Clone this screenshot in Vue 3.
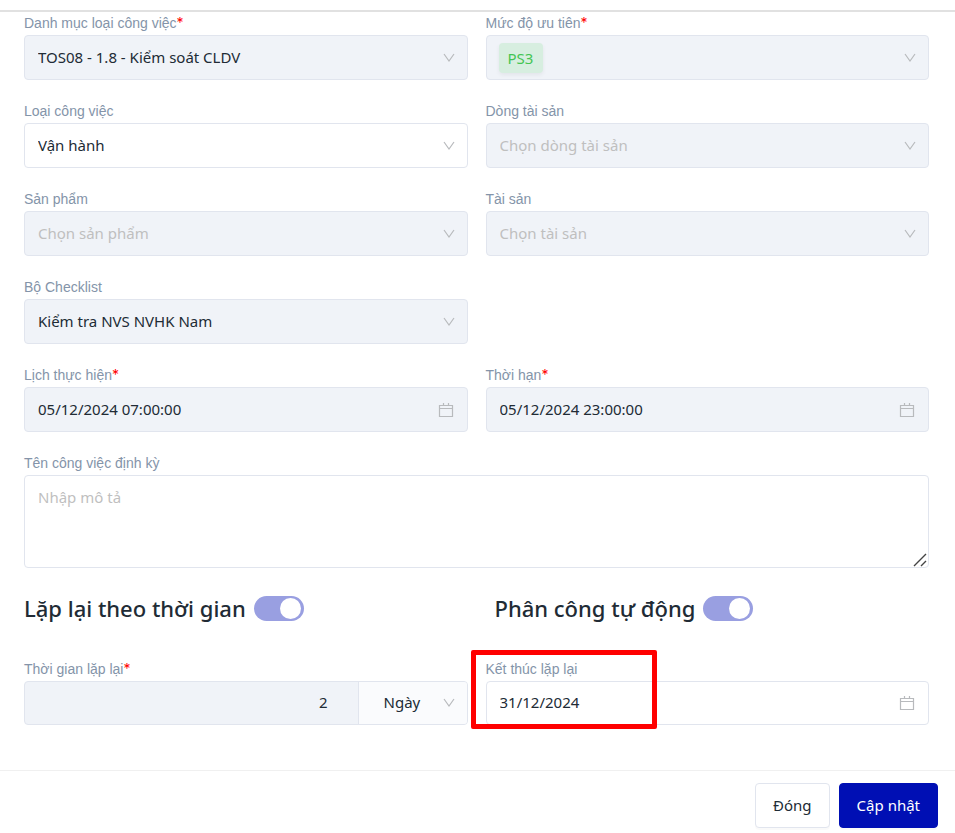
<template>
  <div class="dialog">
    <header class="dialog-head"></header>

    <form class="dialog-body" @submit.prevent>
      <div class="grid">
        <div v-for="f in fields" :key="f.id" class="field" :class="{ first: f.newRow }">
          <label :for="f.id">{{ f.label }}<span v-if="f.required" class="req">*</span></label>

          <div v-if="f.type === 'date'" class="control" :class="{ disabled: f.disabled }">
            <input :id="f.id" type="text" v-model="f.value" :disabled="f.disabled" />
            <svg class="calendar" viewBox="0 0 16 16" aria-hidden="true">
              <path d="M1.500 3.500h13v11h-13zM1.500 6.500h13M5.500 1v3M10.500 1v3" />
            </svg>
          </div>

          <div v-else class="control" :class="{ disabled: f.disabled, tagged: f.tag }">
            <select :id="f.id" v-model="f.value" :disabled="f.disabled" :class="{ tag: f.tag, placeholder: !f.value }">
              <option v-if="f.placeholder" value="">{{ f.placeholder }}</option>
              <option v-else :value="f.value">{{ f.value }}</option>
            </select>
            <svg class="chevron" viewBox="0 0 12 12" aria-hidden="true">
              <path d="M1 2l5 7 5-7" />
            </svg>
          </div>
        </div>

        <div class="field wide">
          <label for="name">Tên công việc định kỳ</label>
          <textarea id="name" v-model="name" placeholder="Nhập mô tả"></textarea>
          <svg class="grip" viewBox="0 0 14 14" aria-hidden="true">
            <path d="M1 13L13 1M8 13l5-5" />
          </svg>
        </div>
      </div>

      <div class="grid switches">
        <div class="switch-row">
          <label for="repeat">Lặp lại theo thời gian</label>
          <input id="repeat" v-model="repeat" class="switch" type="checkbox" role="switch" disabled />
        </div>
        <div class="switch-row second">
          <label for="assign">Phân công tự động</label>
          <input id="assign" v-model="assign" class="switch" type="checkbox" role="switch" disabled />
        </div>
      </div>

      <div class="grid repeat">
        <div class="field">
          <label for="every">Thời gian lặp lại<span class="req">*</span></label>
          <div class="control disabled">
            <input id="every" v-model="every" class="number" type="text" disabled />
            <div class="unit">
              <select v-model="unit" aria-label="Đơn vị">
                <option>Ngày</option>
              </select>
              <svg class="chevron" viewBox="0 0 12 12" aria-hidden="true">
                <path d="M1 2l5 7 5-7" />
              </svg>
            </div>
          </div>
        </div>
        <div class="field">
          <label for="until">Kết thúc lặp lại</label>
          <div class="control">
            <input id="until" v-model="until" type="text" />
            <svg class="calendar" viewBox="0 0 16 16" aria-hidden="true">
              <path d="M1.500 3.500h13v11h-13zM1.500 6.500h13M5.500 1v3M10.500 1v3" />
            </svg>
          </div>
          <div class="highlight"></div>
        </div>
      </div>
    </form>

    <footer class="dialog-foot">
      <button type="button" class="btn">Đóng</button>
      <button type="button" class="btn primary">Cập nhật</button>
    </footer>
  </div>
</template>

<script setup>
import { ref } from 'vue'

const fields = ref([
  { id: 'category', label: 'Danh mục loại công việc', required: true, value: 'TOS08 - 1.8 - Kiểm soát CLDV', disabled: true },
  { id: 'priority', label: 'Mức độ ưu tiên', required: true, value: 'PS3', tag: true, disabled: true },
  { id: 'kind', label: 'Loại công việc', value: 'Vận hành' },
  { id: 'line', label: 'Dòng tài sản', value: '', placeholder: 'Chọn dòng tài sản', disabled: true },
  { id: 'product', label: 'Sản phẩm', value: '', placeholder: 'Chọn sản phẩm', disabled: true },
  { id: 'asset', label: 'Tài sản', value: '', placeholder: 'Chọn tài sản', disabled: true },
  { id: 'checklist', label: 'Bộ Checklist', value: 'Kiểm tra NVS NVHK Nam', disabled: true },
  { id: 'start', label: 'Lịch thực hiện', required: true, type: 'date', value: '05/12/2024 07:00:00', disabled: true, newRow: true },
  { id: 'due', label: 'Thời hạn', required: true, type: 'date', value: '05/12/2024 23:00:00', disabled: true }
])

const name = ref('')
const repeat = ref(true)
const assign = ref(true)
const every = ref('2')
const unit = ref('Ngày')
const until = ref('31/12/2024')
</script>

<style>
body {
  margin: 0;
  background: #fff;
}
</style>

<style scoped>
.dialog {
  font-family: "Noto Sans", sans-serif;
  font-size: 15px;
  color: #212b35;
}

.dialog * {
  box-sizing: border-box;
}

.dialog-head {
  height: 12px;
  border-bottom: 2px solid #e1e1e1;
}

.dialog-body {
  padding: 4px 26px 45px 24px;
}

.grid {
  display: grid;
  grid-template-columns: 1fr 1fr;
  gap: 24px 18px;
}

.field {
  position: relative;
  display: flex;
  flex-direction: column;
  min-width: 0;
}

.first {
  grid-column-start: 1;
}

.wide {
  grid-column: 1 / -1;
}

.field > label {
  font-family: "Liberation Sans", Arial, sans-serif;
  font-size: 14px;
  line-height: 15px;
  padding-bottom: 4px;
  color: #8494a9;
}

.req {
  font-family: Inter, sans-serif;
  line-height: 1;
  color: #f00;
}

.control {
  position: relative;
  display: flex;
  align-items: center;
  height: 45px;
  border: 1px solid #e1e5ee;
  border-radius: 4px;
  background: #fff;
}

.disabled {
  background: #f0f3f8;
}

input[type="text"],
select {
  flex: 1;
  min-width: 0;
  height: 100%;
  margin: 0;
  padding: 0 40px 2px 13px;
  border: 0;
  background: transparent;
  font: inherit;
  color: #212b35;
  opacity: 1;
  outline: none;
  appearance: none;
}

select.placeholder {
  color: #bfbfbf;
}

.tagged {
  padding-left: 12px;
}

select.tag {
  flex: none;
  height: 30px;
  padding: 0 9px;
  border-radius: 4px;
  background: #d7eee0;
  color: #43c553;
  box-shadow: 0 2px 4px rgba(0, 0, 0, 0.06);
}

.chevron {
  position: absolute;
  right: 12px;
  width: 12px;
  height: 12px;
  pointer-events: none;
}

.calendar {
  position: absolute;
  right: 13px;
  width: 16px;
  height: 16px;
  pointer-events: none;
}

.chevron path,
.calendar path {
  fill: none;
  stroke: #b8babd;
  stroke-width: 1.2;
}

textarea {
  display: block;
  width: 100%;
  height: 93px;
  margin: 0;
  padding: 9px 13px;
  border: 1px solid #e1e5ee;
  border-radius: 4px;
  font: inherit;
  line-height: 24px;
  color: #212b35;
  outline: none;
  resize: vertical;
}

textarea::placeholder {
  color: #bfbfbf;
}

textarea::-webkit-resizer {
  background: transparent;
}

.grip {
  position: absolute;
  right: 2px;
  bottom: 1px;
  width: 14px;
  height: 14px;
  pointer-events: none;
}

.grip path {
  stroke: #444;
  stroke-width: 1.4;
}

.switches {
  padding: 22px 0 36px;
}

.switch-row {
  display: flex;
  align-items: center;
  gap: 8px;
  font-size: 22px;
  font-weight: 500;
  line-height: 36px;
}

.second {
  padding-left: 9px;
}

.switch {
  display: flex;
  align-items: center;
  justify-content: flex-end;
  width: 50px;
  height: 25px;
  margin: 0;
  padding: 0 3px;
  border-radius: 13px;
  background: #999fe1;
  appearance: none;
}

.switch::before {
  content: "";
  width: 21px;
  height: 21px;
  border-radius: 50%;
  background: #fff;
}

.switch:not(:checked) {
  justify-content: flex-start;
  background: #c4c8cc;
}

.repeat .control {
  height: 44px;
}

input.number {
  padding-right: 30px;
  text-align: right;
}

.unit {
  position: relative;
  display: flex;
  align-items: center;
  width: 109px;
  height: 100%;
  border-left: 1px solid #e1e5ee;
  border-radius: 0 3px 3px 0;
  background: #fafbfd;
}

.unit select {
  padding-left: 25px;
}

/* frame drawn over the end date */
.highlight {
  position: absolute;
  top: -12px;
  left: -15px;
  width: 186px;
  height: 79px;
  border: 5px solid #f00;
  border-radius: 2px;
  pointer-events: none;
}

.dialog-foot {
  display: flex;
  justify-content: flex-end;
  gap: 9px;
  padding: 12px 17px 5px;
  border-top: 1px solid #f0f0f0;
}

.btn {
  height: 45px;
  padding: 0 17px 2px;
  border: 1px solid #e1e5ee;
  border-radius: 4px;
  background: #fff;
  box-shadow: 0 2px 0 rgba(0, 0, 0, 0.02);
  font: inherit;
  color: #212b35;
}

.primary {
  border-color: #000fb4;
  background: #000fb4;
  color: #fff;
}
</style>
